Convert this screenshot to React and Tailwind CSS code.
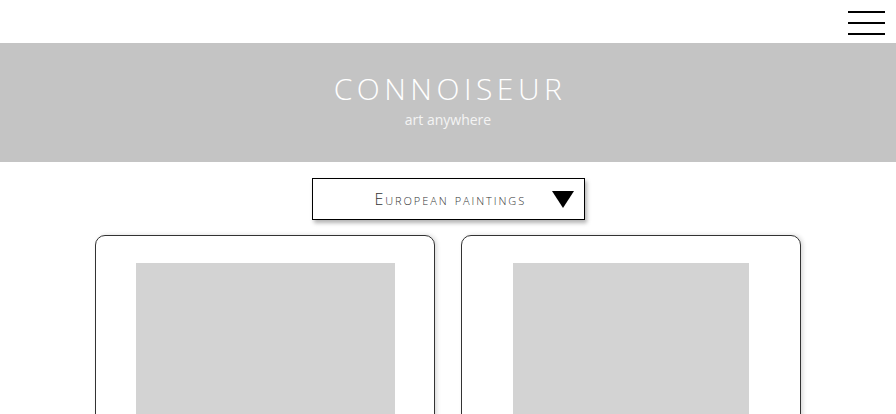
const OPEN = "font-['Open_Sans',sans-serif]";

function Hamburger() {
  return (
    <button aria-label="Menu" className="flex flex-col gap-[9.5px] pt-[11px]">
      <span className="block h-[1.5px] w-[37px] bg-black" />
      <span className="block h-[1.5px] w-[37px] bg-black" />
      <span className="block h-[1.5px] w-[37px] bg-black" />
    </button>
  );
}

function Card({ imgW }) {
  return (
    <div className="h-[200px] w-[340px] rounded-[10px] border border-[#333] bg-white pt-[27px] shadow-[2px_0_4px_rgba(0,0,0,0.15)]">
      <div className="mx-auto h-[180px] bg-[#d3d3d3]" style={{ width: imgW }} />
    </div>
  );
}

export default function App() {
  return (
    <div className={`h-[414px] overflow-hidden bg-white ${OPEN}`}>
      {/* Top bar */}
      <header className="flex h-[43px] justify-end pr-[11px]">
        <Hamburger />
      </header>

      {/* Banner */}
      <section className="flex h-[119px] flex-col items-center bg-[#c4c4c4] pt-[26px]">
        <h1 className="pl-[4px] text-[30px] font-light leading-[40px] tracking-[0.15em] text-white">
          CONNOISEUR
        </h1>
        <p className="mt-[1px] text-[14px] leading-[20px] text-[#f4f4f4]">
          art anywhere
        </p>
      </section>

      {/* Collection picker */}
      <div className="flex justify-center pt-[16px]">
        <button className="flex h-[42px] w-[273px] items-center justify-between border border-black bg-white pl-[62px] pr-[10px] shadow-[2px_3px_4px_rgba(0,0,0,0.3)]">
          <span className="text-[16px] font-light tracking-[0.12em] text-[#333] [font-variant:small-caps]">
            European paintings
          </span>
          <svg width="22" height="17" viewBox="0 0 22 17" aria-hidden>
            <path d="M0 0H22L11 17Z" fill="black" />
          </svg>
        </button>
      </div>

      {/* Artworks */}
      <div className="flex justify-center gap-[26px] pt-[15px]">
        <Card imgW={259} />
        <Card imgW={236} />
      </div>
    </div>
  );
}
